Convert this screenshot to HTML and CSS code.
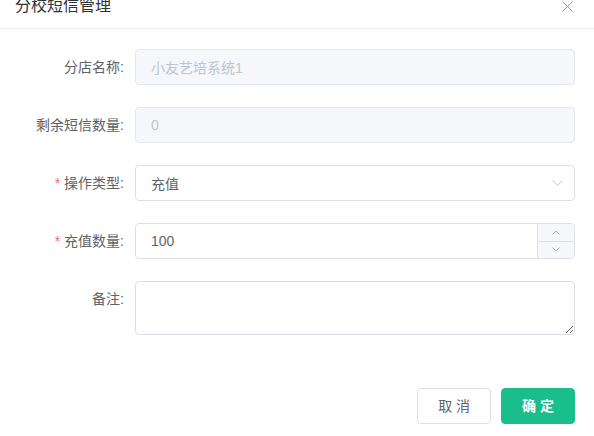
FILE: index.html
```html
<!DOCTYPE html>
<html lang="zh-CN">
<head>
<meta charset="utf-8">
<title>分校短信管理</title>
<link rel="stylesheet" href="styles.css">
</head>
<body>
<div class="dialog">
  <div class="dlg-header">
    <span class="dlg-title">分校短信管理</span>
    <button class="dlg-close" type="button" aria-label="关闭">
      <svg width="11" height="11" viewBox="0 0 11 11"><path d="M0.5 0.5 L10.5 10.5 M10.5 0.5 L0.5 10.5" stroke="#909399" stroke-width="1" fill="none"/></svg>
    </button>
  </div>
  <form class="dlg-body">
    <div class="form-row">
      <label class="form-label">分店名称:</label>
      <input class="inp is-disabled" type="text" value="小友艺培系统1" disabled>
    </div>
    <div class="form-row">
      <label class="form-label">剩余短信数量:</label>
      <input class="inp is-disabled" type="text" value="0" disabled>
    </div>
    <div class="form-row">
      <label class="form-label"><span class="req">*</span>操作类型:</label>
      <div class="inp select">
        <span>充值</span>
        <svg class="sel-arrow" width="11" height="6" viewBox="0 0 11 6"><path d="M0.5 0.5 L5.5 5.3 L10.5 0.5" stroke="#c0c4cc" stroke-width="1" fill="none"/></svg>
      </div>
    </div>
    <div class="form-row">
      <label class="form-label"><span class="req">*</span>充值数量:</label>
      <div class="inp number">
        <span class="num-val">100</span>
        <div class="num-ctrl">
          <span class="num-btn"><svg width="8" height="5" viewBox="0 0 8 5"><path d="M0.5 4.5 L4 1 L7.5 4.5" stroke="#a8abb2" stroke-width="1" fill="none"/></svg></span>
          <span class="num-btn num-down"><svg width="8" height="5" viewBox="0 0 8 5"><path d="M0.5 0.5 L4 4 L7.5 0.5" stroke="#a8abb2" stroke-width="1" fill="none"/></svg></span>
        </div>
      </div>
    </div>
    <div class="form-row form-row-area">
      <label class="form-label">备注:</label>
      <textarea class="area" rows="2"></textarea>
    </div>
  </form>
  <div class="dlg-footer">
    <button class="btn" type="button">取 消</button>
    <button class="btn btn-primary" type="button">确 定</button>
  </div>
</div>
</body>
</html>
```
FILE: styles.css
```css
* { box-sizing: border-box; }
html, body { margin: 0; padding: 0; background: #fff; }
body {
  font-family: "Liberation Sans", "Noto Sans CJK SC", sans-serif;
  font-size: 14px;
  color: #606266;
  width: 594px;
  height: 436px;
  overflow: hidden;
}
.dialog { width: 594px; }
.dlg-header {
  height: 29px;
  border-bottom: 1px solid #ebeef5;
  display: flex;
  justify-content: space-between;
  align-items: flex-start;
  padding: 0 21px 0 15px;
}
.dlg-title {
  font-size: 16px;
  line-height: 18px;
  margin-top: -3px;
  color: #303133;
}
.dlg-close {
  border: 0;
  background: none;
  padding: 0;
  margin-top: 1px;
  width: 11px;
  height: 11px;
  display: flex;
}
.dlg-body { padding: 20px 19px 0 0; }
.form-row {
  display: grid;
  grid-template-columns: 135px 1fr;
  margin-bottom: 22px;
}
.form-label {
  text-align: right;
  padding-right: 11px;
  line-height: 36px;
  font-size: 14px;
  color: #606266;
}
.req { color: #f56c6c; margin-right: 4px; }
.inp {
  height: 36px;
  border: 1px solid #dcdfe6;
  border-radius: 4px;
  padding: 0 15px;
  font: inherit;
  font-size: 14px;
  color: #606266;
  background: #fff;
  width: 100%;
  outline: none;
}
.is-disabled {
  background: #f5f7fa;
  border-color: #e4e7ed;
  color: #c0c4cc;
  -webkit-text-fill-color: #c0c4cc;
  opacity: 1;
}
.select {
  display: flex;
  align-items: center;
  justify-content: space-between;
  padding-right: 11px;
}
.sel-arrow { display: block; }
.number {
  display: flex;
  align-items: center;
  padding-right: 0;
  overflow: hidden;
}
.num-val { flex: 1; }
.num-ctrl {
  width: 37px;
  height: 100%;
  border-left: 1px solid #dcdfe6;
  background: #f5f7fa;
  display: flex;
  flex-direction: column;
}
.num-btn {
  flex: 1;
  display: flex;
  align-items: center;
  justify-content: center;
}
.num-down { border-top: 1px solid #dcdfe6; }
.area {
  display: block;
  width: 100%;
  height: 54px;
  border: 1px solid #dcdfe6;
  border-radius: 4px;
  padding: 5px 15px;
  font: inherit;
  font-size: 14px;
  line-height: 1.5;
  color: #606266;
  resize: vertical;
  outline: none;
}
.dlg-footer {
  display: flex;
  justify-content: flex-end;
  gap: 10px;
  padding: 31px 19px 0 0;
}
.btn {
  height: 36px;
  padding: 0 20px;
  border: 1px solid #dcdfe6;
  border-radius: 4px;
  background: #fff;
  color: #606266;
  font-family: "Liberation Sans", "Noto Sans CJK SC", sans-serif;
  font-size: 14px;
  line-height: 34px;
  white-space: pre;
}
.btn-primary {
  background: #19be8b;
  border-color: #19be8b;
  color: #fff;
  font-weight: bold;
}
```
